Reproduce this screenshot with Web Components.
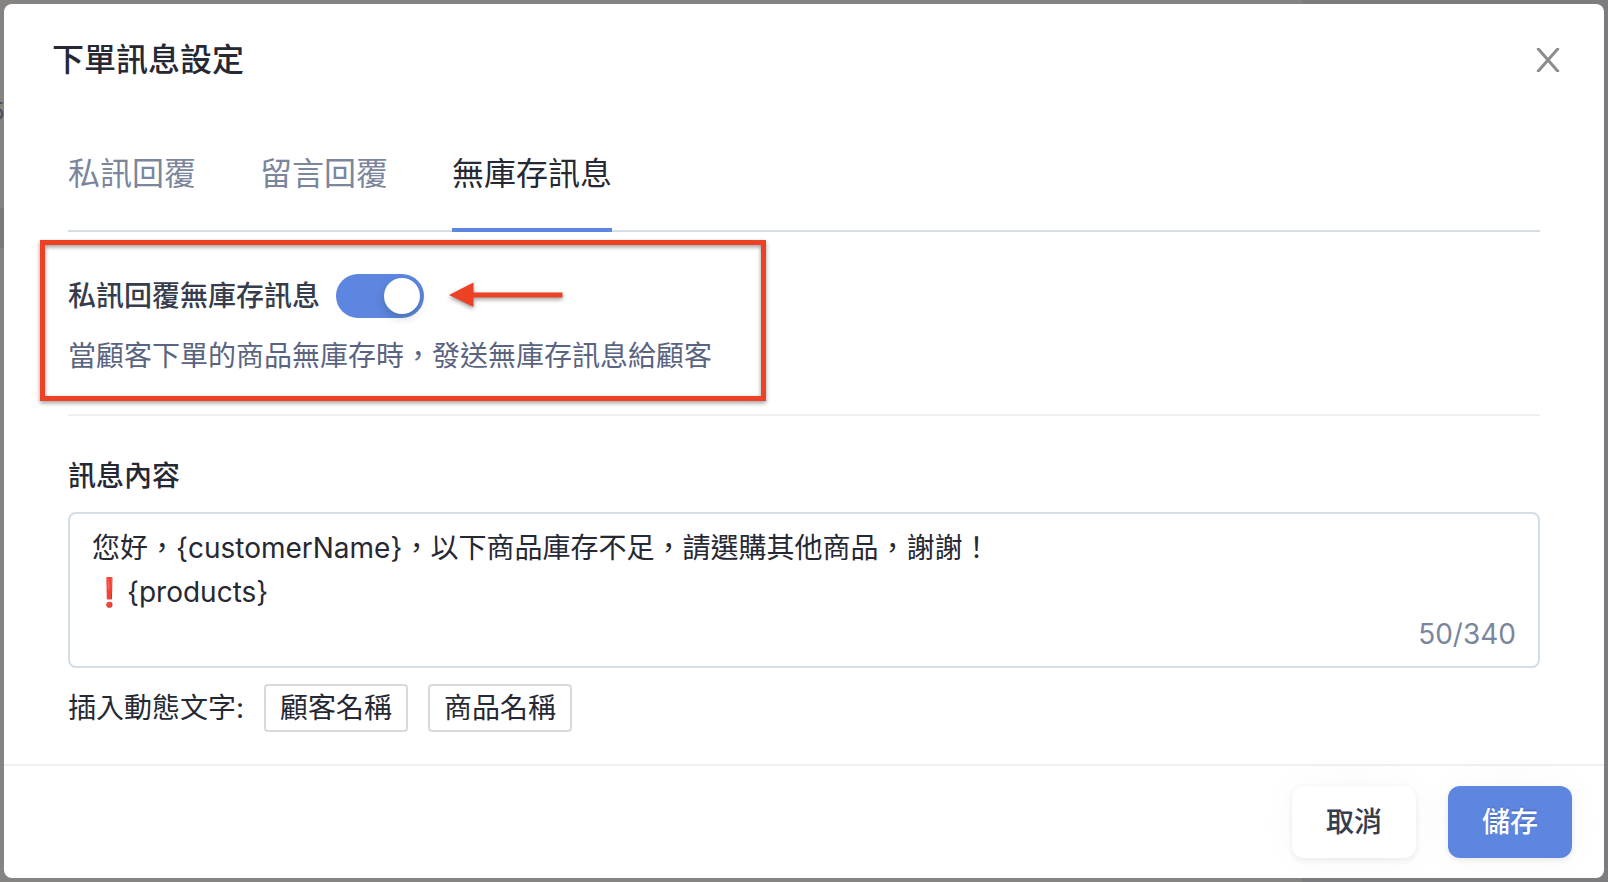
<!DOCTYPE html>
<html lang="zh-Hant">
<head>
<meta charset="utf-8">
<title>下單訊息設定</title>
<style>
html, body { height: 100%; margin: 0; }
body {
  background: #7f7e7f;
  font-family: Inter, "Noto Sans CJK TC", sans-serif;
  font-size: 28px;
  line-height: 44px;
  color: #262833;
}
</style>
</head>
<body>
<order-message-page></order-message-page>
<script>
class Base extends HTMLElement {
  constructor() {
    super();
    this.attachShadow({ mode: 'open' }).innerHTML =
      '<style>*{box-sizing:border-box}button,input,textarea{font:inherit;color:inherit;margin:0}</style>' + this.render();
  }
}

customElements.define('app-dialog', class extends Base {
  render() {
    return `<style>
      :host { display: flex; flex-direction: column; flex: 1; position: relative; background: #fff; border-radius: 8px; overflow: hidden; }
      header { display: flex; justify-content: space-between; align-items: center; padding: 34px 40px 32px 48px; }
      h1 { margin: 0; font-size: 32px; line-height: 44px; font-weight: 500; }
      .close { display: flex; padding: 4px; border: 0; background: none; color: #8c8c8c; }
      main { flex: 1; padding: 0 64px; }
      footer { display: flex; justify-content: flex-end; gap: 32px; padding: 20px 32px; border-top: 2px solid #f0f0f0; }
    </style>
    <header><h1><slot name="title"></slot></h1>
      <button class="close" aria-label="關閉"><svg width="24" height="24" viewBox="0 0 24 24" fill="none" stroke="currentColor" stroke-width="3"><path d="M1.5 0L22.5 24M22.5 0L1.5 24"/></svg></button>
    </header>
    <main><slot></slot></main>
    <footer><slot name="actions"></slot></footer>`;
  }
});

customElements.define('tab-bar', class extends Base {
  render() {
    return `<style>
      :host { display: flex; gap: 64px; border-bottom: 2px solid #d3dee6; }
    </style><slot></slot>`;
  }
});

customElements.define('tab-item', class extends Base {
  render() {
    return `<style>
      :host { display: block; margin-bottom: -2px; }
      button { display: block; border: 0; border-bottom: 4px solid transparent; background: none; padding: 38px 0 32px; font-size: 32px; line-height: 44px; color: #7b869c; }
      :host([selected]) button { color: #262833; border-color: #5c86e0; }
    </style><button role="tab"><slot></slot></button>`;
  }
});

customElements.define('toggle-row', class extends Base {
  render() {
    return `<style>
      :host { display: block; position: relative; padding: 42px 0 36px; border-bottom: 2px solid #f0f0f0; }
      .row { display: flex; align-items: center; gap: 16px; color: #363c4c; font-weight: 500; }
      input { appearance: none; width: 88px; height: 44px; border-radius: 22px; background: #5c86e0; padding: 4px; display: flex; justify-content: flex-end; }
      input::before { content: ""; width: 36px; height: 36px; border-radius: 50%; background: #fff; box-shadow: 0 4px 8px rgba(0,35,11,.2); }
      p { margin: 16px 0 0; color: #5a6480; }
    </style>
    <div class="row"><label for="t"><slot name="label"></slot></label><input id="t" type="checkbox" role="switch" checked></div>
    <p><slot></slot></p>
    <slot name="annotation"></slot>`;
  }
});

customElements.define('highlight-box', class extends Base {
  render() {
    return `<style>
      :host { position: absolute; left: -28px; top: 8px; width: 726px; height: 161px; border: 5px solid #ec4125; filter: drop-shadow(0 2px 2px rgba(0,0,0,.4)); pointer-events: none; }
      svg { position: absolute; left: 403px; top: 37px; }
    </style><svg width="116" height="26" viewBox="0 0 116 26" fill="#ec4125"><path d="M1 13L25.500 .5V10.500H114.500V15.500H25.500V25Z"/></svg>`;
  }
});

customElements.define('message-field', class extends Base {
  render() {
    return `<style>
      :host { display: block; margin-top: 38px; }
      label { display: block; font-weight: 500; margin-bottom: 14px; }
      .box { position: relative; border: 2px solid #d3dee6; border-radius: 8px; padding: 12px 22px; height: 156px; }
      textarea { display: block; width: 100%; height: 88px; border: 0; padding: 0; resize: none; outline: 0; background: none; overflow: hidden; line-height: 44px; }
      output { position: absolute; right: 22px; bottom: 10px; color: #7b869c; }
    </style>
    <label for="m">訊息內容</label>
    <div class="box"><textarea id="m">您好，{customerName}，以下商品庫存不足，請選購其他商品，謝謝！
❗{products}</textarea><output for="m">50/340</output></div>`;
  }
});

customElements.define('token-list', class extends Base {
  render() {
    return `<style>
      :host { display: flex; align-items: center; gap: 20px; margin: 16px 0 32px; }
    </style><span>插入動態文字:</span><slot></slot>`;
  }
});

customElements.define('token-button', class extends Base {
  render() {
    return `<style>
      :host { display: block; }
      button { display: block; height: 48px; padding: 0 14px; border: 2px solid #d9d9d9; border-radius: 4px; background: #fff; line-height: 44px; }
    </style><button><slot></slot></button>`;
  }
});

customElements.define('action-button', class extends Base {
  render() {
    return `<style>
      :host { display: block; }
      button { display: block; padding: 14px 34px; border: 0; border-radius: 12px; background: #fff; color: #363c4c; font-weight: 500; box-shadow: 0 2px 6px rgba(0,0,0,.08), 0 0 40px rgba(0,0,0,.03); }
      :host([primary]) button { background: #5c86e0; color: #fff; text-shadow: 0 -2px 0 rgba(0,0,0,.12); }
    </style><button><slot></slot></button>`;
  }
});

customElements.define('order-message-page', class extends Base {
  render() {
    return `<style>
      :host { display: flex; position: relative; min-height: 100vh; padding: 4px; box-sizing: border-box; overflow: hidden;
        background: linear-gradient(#7a7a7a, #7a7a7a) 0 208px / 4px 40px no-repeat, linear-gradient(90deg, #858483 81%, #7c7c7e 81%); }
      .behind { position: absolute; left: -10px; top: 90px; font-size: 24px; color: #4b505a; }
    </style>
    <span class="behind">5</span>
    <app-dialog>
      <span slot="title">下單訊息設定</span>
      <tab-bar role="tablist"><tab-item>私訊回覆</tab-item><tab-item>留言回覆</tab-item><tab-item selected>無庫存訊息</tab-item></tab-bar>
      <toggle-row><span slot="label">私訊回覆無庫存訊息</span>當顧客下單的商品無庫存時，發送無庫存訊息給顧客<highlight-box slot="annotation"></highlight-box></toggle-row>
      <message-field></message-field>
      <token-list><token-button>顧客名稱</token-button><token-button>商品名稱</token-button></token-list>
      <action-button slot="actions">取消</action-button>
      <action-button slot="actions" primary>儲存</action-button>
    </app-dialog>`;
  }
});
</script>
</body>
</html>
